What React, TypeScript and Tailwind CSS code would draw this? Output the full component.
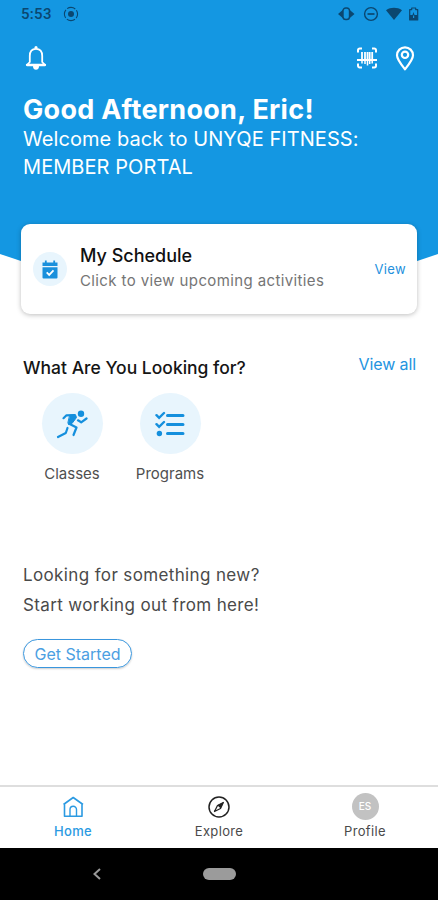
import type { ReactNode } from "react";

const ACTIVITIES = [
  { label: "Classes", icon: <RunnerIcon /> },
  { label: "Programs", icon: <ChecklistIcon /> },
];

function StatusBar() {
  return (
    <div className="flex h-[28px] items-center justify-between pr-[18px] pl-[21px] text-[#0b4770]">
      <div className="flex items-center gap-[11px]">
        <span className="font-[Roboto] text-[15px] leading-none font-medium tracking-[0.3px]">5:53</span>
        <svg width="16" height="16" viewBox="0 0 16 16" fill="none" stroke="currentColor">
          <circle cx="8" cy="8" r="6.6" strokeWidth="1.1" strokeDasharray="8.7 1.67" strokeDashoffset="4.3" />
          <circle cx="8" cy="8" r="3" fill="currentColor" stroke="none" />
        </svg>
      </div>
      <svg width="82" height="16" viewBox="0 0 82 16" fill="none" stroke="currentColor">
        <rect x="5" y="2" width="6.5" height="11.5" rx="2.8" strokeWidth="1.4" />
        <path d="M5 3.800 0 8 5 12.200zM11.500 3.800 16.500 8 11.500 12.200z" fill="currentColor" stroke="none" />
        <path d="M8.250 4.500v6.500" stroke="#1497e2" strokeWidth="2" />
        <circle cx="33" cy="8" r="6.400" strokeWidth="1.400" />
        <path d="M29.500 8h7" strokeWidth="1.700" />
        <path d="M48 4.200c4.800-3.200 11.200-3.200 16 0L56 14z" fill="currentColor" stroke="none" />
        <path d="M71.700 14V3.600h2V2h4v1.600h2V14z" strokeWidth="1.200" strokeLinejoin="round" />
        <path d="M71.500 9h3l1-3 1 3h3v5h-8z" fill="currentColor" stroke="none" />
        <path d="M75.600 9.500v2.500" stroke="#1497e2" strokeWidth="1.200" />
      </svg>
    </div>
  );
}

function BellIcon() {
  return (
    <svg width="22" height="26" viewBox="0 0 22 26" fill="none" stroke="currentColor" strokeWidth="1.8">
      <path d="M4.800 17V11C4.800 6.800 7 3.900 11 3.900s6.200 2.900 6.200 7.100v6l2.600 2.800H2.200z" strokeLinejoin="round" />
      <circle cx="11" cy="2.700" r="1.600" fill="currentColor" stroke="none" />
      <path d="M2 20h18" strokeWidth="2.300" strokeLinecap="round" />
      <path d="M8 21h6a3 3.800 0 0 1-6 0z" fill="currentColor" stroke="none" />
    </svg>
  );
}

function BarcodeIcon() {
  return (
    <svg width="20" height="22" viewBox="0 0 20 22" fill="none" stroke="currentColor" strokeWidth="2">
      <path d="M1 5.500V3.200A1.700 1.700 0 0 1 2.700 1.500h2.300M15 1.500h2.300A1.700 1.700 0 0 1 19 3.200v2.300M1 16.500v2.300a1.700 1.700 0 0 0 1.700 1.700H5M15 20.500h2.300a1.700 1.700 0 0 0 1.700-1.700v-2.300" />
      <path d="M0 13h20" strokeWidth="2" />
      <path d="M5 5v8M8 5v8M10.500 5v8M12.700 5v8M15.200 5v8" strokeWidth="1.800" />
      <path d="M5 14v2.500M8 14v3M10.500 14v4.500M12.700 14v3M15.200 14v2.500" strokeWidth="1.500" />
    </svg>
  );
}

function PinIcon() {
  return (
    <svg width="20" height="25" viewBox="0 0 20 25" fill="none" stroke="currentColor" strokeWidth="2.2">
      <path d="M10 23.300C6 18.300 2 13.500 2 9.300a8 8 0 0 1 16 0c0 4.200-4 9-8 14z" strokeLinejoin="round" />
      <circle cx="10" cy="8.800" r="3.200" />
    </svg>
  );
}

function CalendarIcon() {
  return (
    <svg width="16" height="19" viewBox="0 0 16 19" fill="none">
      <path d="M0.500 2.500h15V6h-15zM0.500 7.200h15v10.300a1 1 0 0 1-1 1h-13a1 1 0 0 1-1-1z" fill="#1a90dc" />
      <path d="M3.800 0.500v3M12.200 0.500v3" stroke="#1a90dc" strokeWidth="1.800" />
      <path d="m4.700 12.400 2.500 2.500 4.300-4.500" stroke="#fff" strokeWidth="1.800" />
    </svg>
  );
}

function RunnerIcon() {
  return (
    <svg width="32" height="30" viewBox="0 0 32 30" fill="none" stroke="#148fdd" strokeWidth="2.2" strokeLinecap="round" strokeLinejoin="round">
      <circle cx="25" cy="4.700" r="3.200" fill="#148fdd" stroke="none" />
      <path d="M7.500 9.200 10.500 6.300l8-.3" />
      <path d="M14 6.200 19.500 5.800 20.500 8.500 16 14.500 12.500 15.500 12 14z" fill="#148fdd" strokeWidth="1" />
      <path d="m22 11.300 3.200 2L30.500 9.500" />
      <path d="M13.200 14.800 20.500 18.500 17.500 26" />
      <path d="M11.500 19 9.800 24 2 28" />
    </svg>
  );
}

function ChecklistIcon() {
  return (
    <svg width="30" height="26" viewBox="0 0 30 26" fill="none" stroke="#148fdd" strokeWidth="2.6">
      <path d="M12.500 4.500h15.500M12.500 13.500h15.500M12.500 22.500h15.500" strokeWidth="3" strokeLinecap="round" />
      <path d="m1.500 4.200 2.600 2.600L9 2M1.500 13.200l2.600 2.600L9 11" strokeWidth="2.400" strokeLinecap="round" />
      <circle cx="4.400" cy="22.500" r="2.700" fill="#148fdd" stroke="none" />
    </svg>
  );
}

function HomeIcon() {
  return (
    <svg width="22" height="22" viewBox="0 0 22 22" fill="none" stroke="currentColor" strokeWidth="1.6">
      <path d="M1.500 8.500 11.200 1.500l9.800 7M2.500 7.500V20.200h17.500V7.500" strokeLinejoin="round" />
      <path d="M8 20v-6.500a3 3 0 0 1 6.500 0V20" strokeWidth="1.400" />
    </svg>
  );
}

function CompassIcon() {
  return (
    <svg width="22" height="22" viewBox="0 0 22 22" fill="none" stroke="#222">
      <circle cx="11" cy="11" r="10" strokeWidth="1.500" />
      <path d="M15.800 6 12.700 12.500 9.300 9.300z" fill="#222" stroke="none" />
      <path d="M15.300 6.500 9.500 9.500 6.500 15.500l6-3z" strokeWidth="1.300" strokeLinejoin="round" />
    </svg>
  );
}

function NavItem({ icon, label, active }: { icon: ReactNode; label: string; active?: boolean }) {
  return (
    <button className={active ? "flex flex-1 flex-col items-center font-medium text-[#2b9ae2]" : "flex flex-1 flex-col items-center text-[#4a4a4a]"}>
      <span className="flex h-[27px] items-center">{icon}</span>
      <span className="mt-[3px] text-[13px] leading-[16px] tracking-[0.35px]">{label}</span>
    </button>
  );
}

export default function App() {
  return (
    <div className="relative flex h-[900px] w-[438px] flex-col overflow-hidden bg-white font-[Inter,sans-serif]">
      <svg className="absolute top-0 left-0" width="438" height="300" viewBox="0 0 438 300">
        <path d="M0 0h438v254Q219 332 0 254z" fill="#1497e2" />
      </svg>

      <header className="relative h-[224px] text-white">
        <StatusBar />
        <div className="mt-[17px] flex items-center justify-between pr-[23px] pl-[25px]">
          <BellIcon />
          <div className="flex items-center gap-[18px]">
            <BarcodeIcon />
            <PinIcon />
          </div>
        </div>
        <h1 className="mt-[23px] pl-[23px] text-[27px] leading-[32px] font-bold tracking-[0.3px] whitespace-nowrap">Good Afternoon, Eric!</h1>
        <p className="-mt-px pl-[23px] text-[20px] leading-[28px] tracking-[0.07px] whitespace-nowrap">
          Welcome back to UNYQE FITNESS:
          <br />
          MEMBER PORTAL
        </p>
      </header>

      <section className="relative mx-[21px] flex h-[90px] items-center rounded-[9px] bg-white pr-[11px] pl-[12px] shadow-[0_1px_5px_rgba(0,0,0,0.26)]">
        <div className="flex size-[34px] items-center justify-center rounded-full bg-[#e8f5fd]">
          <CalendarIcon />
        </div>
        <div className="-mt-[2px] ml-[13px] flex-1 whitespace-nowrap">
          <h2 className="text-[18px] leading-[25px] font-medium text-[#111]">My Schedule</h2>
          <p className="text-[15px] leading-[25px] tracking-[0.38px] text-[#757575]">Click to view upcoming activities</p>
        </div>
        <button className="mt-[2px] text-[13px] tracking-[0.35px] text-[#2490dd]">View</button>
      </section>

      <section className="mt-[38px] pr-[22px] pl-[23px]">
        <div className="flex justify-between">
          <h2 className="mt-[3px] text-[17.5px] leading-[25px] font-medium whitespace-nowrap text-[#151515]">What Are You Looking for?</h2>
          <button className="h-[24px] text-[16px] leading-[24px] tracking-[-0.1px] text-[#2494df]">View all</button>
        </div>
        <div className="mt-[13px] flex">
          {ACTIVITIES.map((activity) => (
            <div key={activity.label} className="flex w-[98px] flex-col items-center">
              <div className="flex size-[61px] items-center justify-center rounded-full bg-[#e8f5fd]">{activity.icon}</div>
              <span className="mt-[10px] text-[15px] leading-[20px] text-[#4f4f4f]">{activity.label}</span>
            </div>
          ))}
        </div>
      </section>

      <section className="mt-[76px] flex-1 pl-[23px]">
        <p className="text-[17px] leading-[30px] tracking-[0.37px] whitespace-nowrap text-[#4a4a4a]">
          Looking for something new?
          <br />
          Start working out from here!
        </p>
        <button className="mt-[19px] h-[29px] w-[109px] rounded-full border-[1.5px] border-[#3a96dd] text-[16px] leading-none whitespace-nowrap text-[#4ba0e2] shadow-[0_1px_2px_rgba(0,0,0,0.2)]">
          Get Started
        </button>
      </section>

      <nav className="flex h-[63px] border-t-2 border-[#dedede] pt-[6px]">
        <NavItem active icon={<HomeIcon />} label="Home" />
        <NavItem icon={<CompassIcon />} label="Explore" />
        <NavItem
          icon={
            <span className="flex size-[27px] items-center justify-center rounded-full bg-[#c2c2c2] text-[10px] font-medium text-white">ES</span>
          }
          label="Profile"
        />
      </nav>

      <div className="flex h-[52px] items-center bg-black pl-[92px]">
        <svg width="10" height="14" viewBox="0 0 10 14" fill="none" stroke="#999" strokeWidth="2">
          <path d="M8 2 2.500 7 8 12" />
        </svg>
        <div className="ml-[101px] h-[12px] w-[33px] rounded-full bg-[#9b9b9b]" />
      </div>
    </div>
  );
}
